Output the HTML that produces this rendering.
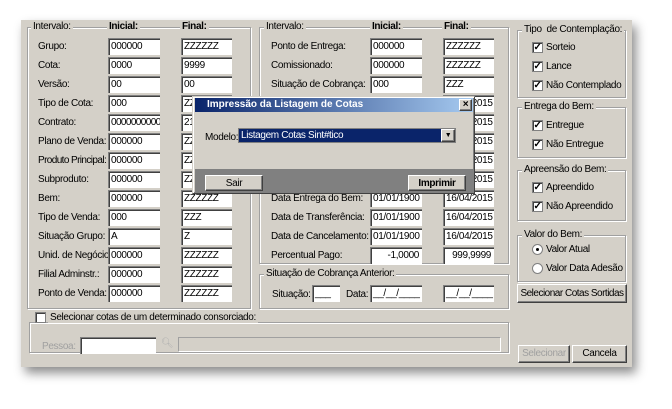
<!DOCTYPE html><html><head><style>
body{margin:0;width:672px;height:409px;background:#fff;position:relative;overflow:hidden;font-family:"Liberation Sans",sans-serif;font-size:10px;letter-spacing:-0.35px;color:#000}
div,span{position:absolute;box-sizing:border-box}
#win{left:21px;top:20px;width:611px;height:347px;background:#d4d0c8;box-shadow:4px 6px 10px rgba(0,0,0,.45)}
.gb{border:1px solid #a0a0a0;box-shadow:1px 1px 0 #fff,inset 1px 1px 0 #fff}
.lg{background:#d4d0c8;padding:0 2px;white-space:nowrap}
.l{white-space:nowrap}
.i{background:#fff;height:17px;border-top:1px solid #808080;border-left:1px solid #808080;box-shadow:inset 1px 1px 0 #404040;padding:2px 0 0 2px;white-space:nowrap;overflow:hidden}
.r{text-align:right;padding-right:3px}
.cb{width:11px;height:11px;background:#fff;border:1px solid #808080;box-shadow:inset 1px 1px 0 #404040;font-size:10px;line-height:9px;text-align:center;font-weight:bold}
.rb{width:11px;height:11px;border-radius:50%;background:#fff;border:1px solid #808080}
.bt{background:#d4d0c8;border:1px solid;border-color:#fff #404040 #404040 #fff;box-shadow:inset -1px -1px 0 #808080;text-align:center;line-height:15px;white-space:nowrap}
</style></head><body>
<div id="win"></div>
<div class="gb" style="left:27px;top:27px;width:224px;height:282px"></div>
<span class="lg" style="left:31px;top:21px">Intervalo:</span>
<span class="lg" style="left:107px;top:21px;font-weight:bold">Inicial:</span>
<span class="lg" style="left:180px;top:21px;font-weight:bold">Final:</span>

<span class="l" style="left:38px;top:41px">Grupo:</span><div class="i" style="left:108px;top:38px;width:52px">000000</div><div class="i" style="left:181px;top:38px;width:51px">ZZZZZZ</div>
<span class="l" style="left:38px;top:60px">Cota:</span><div class="i" style="left:108px;top:57px;width:52px">0000</div><div class="i" style="left:181px;top:57px;width:51px">9999</div>
<span class="l" style="left:38px;top:79px">Versão:</span><div class="i" style="left:108px;top:76px;width:52px">00</div><div class="i" style="left:181px;top:76px;width:51px">00</div>
<span class="l" style="left:38px;top:98px">Tipo de Cota:</span><div class="i" style="left:108px;top:95px;width:52px">000</div><div class="i" style="left:181px;top:95px;width:51px">ZZZ</div>
<span class="l" style="left:38px;top:117px">Contrato:</span><div class="i" style="left:108px;top:114px;width:52px;letter-spacing:-0.6px">0000000000</div><div class="i" style="left:181px;top:114px;width:51px">2199</div>
<span class="l" style="left:38px;top:136px">Plano de Venda:</span><div class="i" style="left:108px;top:133px;width:52px">000000</div><div class="i" style="left:181px;top:133px;width:51px">ZZZZZZ</div>
<span class="l" style="left:38px;top:155px;letter-spacing:-0.6px">Produto Principal:</span><div class="i" style="left:108px;top:152px;width:52px">000000</div><div class="i" style="left:181px;top:152px;width:51px">ZZZZZZ</div>
<span class="l" style="left:38px;top:174px">Subproduto:</span><div class="i" style="left:108px;top:171px;width:52px">000000</div><div class="i" style="left:181px;top:171px;width:51px">ZZZZZZ</div>
<span class="l" style="left:38px;top:193px">Bem:</span><div class="i" style="left:108px;top:190px;width:52px">000000</div><div class="i" style="left:181px;top:190px;width:51px">ZZZZZZ</div>
<span class="l" style="left:38px;top:212px">Tipo de Venda:</span><div class="i" style="left:108px;top:209px;width:52px">000</div><div class="i" style="left:181px;top:209px;width:51px">ZZZ</div>
<span class="l" style="left:38px;top:231px">Situação Grupo:</span><div class="i" style="left:108px;top:228px;width:52px">A</div><div class="i" style="left:181px;top:228px;width:51px">Z</div>
<span class="l" style="left:38px;top:250px">Unid. de Negócio:</span><div class="i" style="left:108px;top:247px;width:52px">000000</div><div class="i" style="left:181px;top:247px;width:51px">ZZZZZZ</div>
<span class="l" style="left:38px;top:269px">Filial Adminstr.:</span><div class="i" style="left:108px;top:266px;width:52px">000000</div><div class="i" style="left:181px;top:266px;width:51px">ZZZZZZ</div>
<span class="l" style="left:38px;top:288px">Ponto de Venda:</span><div class="i" style="left:108px;top:285px;width:52px">000000</div><div class="i" style="left:181px;top:285px;width:51px">ZZZZZZ</div>

<div class="gb" style="left:259px;top:27px;width:250px;height:237px"></div>
<span class="lg" style="left:264px;top:21px">Intervalo:</span>
<span class="lg" style="left:370px;top:21px;font-weight:bold">Inicial:</span>
<span class="lg" style="left:442px;top:21px;font-weight:bold">Final:</span>
<span class="l" style="left:271px;top:41px">Ponto de Entrega:</span><div class="i" style="left:370px;top:38px;width:52px">000000</div><div class="i" style="left:443px;top:38px;width:51px">ZZZZZZ</div>
<span class="l" style="left:271px;top:60px">Comissionado:</span><div class="i" style="left:370px;top:57px;width:52px">000000</div><div class="i" style="left:443px;top:57px;width:51px">ZZZZZZ</div>
<span class="l" style="left:271px;top:79px">Situação de Cobrança:</span><div class="i" style="left:370px;top:76px;width:52px">000</div><div class="i" style="left:443px;top:76px;width:51px">ZZZ</div>
<div class="i" style="left:443px;top:95px;width:51px">16/04/2015</div>
<div class="i" style="left:443px;top:114px;width:51px">16/04/2015</div>
<div class="i" style="left:443px;top:133px;width:51px">16/04/2015</div>
<div class="i" style="left:443px;top:152px;width:51px">16/04/2015</div>
<div class="i" style="left:443px;top:171px;width:51px">16/04/2015</div>
<span class="l" style="left:271px;top:193px">Data Entrega do Bem:</span><div class="i" style="left:370px;top:190px;width:52px">01/01/1900</div><div class="i" style="left:443px;top:190px;width:51px">16/04/2015</div>
<span class="l" style="left:271px;top:212px">Data de Transferência:</span><div class="i" style="left:370px;top:209px;width:52px">01/01/1900</div><div class="i" style="left:443px;top:209px;width:51px">16/04/2015</div>
<span class="l" style="left:271px;top:231px">Data de Cancelamento:</span><div class="i" style="left:370px;top:228px;width:52px">01/01/1900</div><div class="i" style="left:443px;top:228px;width:51px">16/04/2015</div>
<span class="l" style="left:271px;top:250px">Percentual Pago:</span><div class="i r" style="left:370px;top:247px;width:52px">-1,0000</div><div class="i r" style="left:443px;top:247px;width:51px">999,9999</div>

<div class="gb" style="left:259px;top:274px;width:250px;height:35px"></div>
<span class="lg" style="left:264px;top:268px">Situação de Cobrança Anterior:</span>
<span class="l" style="left:272px;top:289px">Situação:</span><div class="i" style="left:312px;top:285px;width:28px">___</div>
<span class="l" style="left:346px;top:289px">Data:</span><div class="i" style="left:370px;top:285px;width:52px">__/__/____</div><div class="i" style="left:443px;top:285px;width:51px">__/__/____</div>

<div class="gb" style="left:517px;top:30px;width:109px;height:68px"></div>
<span class="lg" style="left:522px;top:24px">Tipo &nbsp;de Contemplação:</span>
<div class="cb" style="left:532px;top:42px">✓</div><span class="l" style="left:546px;top:42px">Sorteio</span>
<div class="cb" style="left:532px;top:61px">✓</div><span class="l" style="left:546px;top:61px">Lance</span>
<div class="cb" style="left:532px;top:80px">✓</div><span class="l" style="left:546px;top:80px">Não Contemplado</span>
<div class="gb" style="left:517px;top:107px;width:109px;height:51px"></div>
<span class="lg" style="left:522px;top:101px">Entrega do Bem:</span>
<div class="cb" style="left:532px;top:120px">✓</div><span class="l" style="left:546px;top:120px">Entregue</span>
<div class="cb" style="left:532px;top:139px">✓</div><span class="l" style="left:546px;top:139px">Não Entregue</span>
<div class="gb" style="left:517px;top:170px;width:109px;height:51px"></div>
<span class="lg" style="left:522px;top:164px">Apreensão do Bem:</span>
<div class="cb" style="left:532px;top:182px">✓</div><span class="l" style="left:546px;top:182px">Apreendido</span>
<div class="cb" style="left:532px;top:201px">✓</div><span class="l" style="left:546px;top:201px">Não Apreendido</span>
<div class="gb" style="left:517px;top:235px;width:109px;height:47px"></div>
<span class="lg" style="left:522px;top:229px">Valor do Bem:</span>
<div class="rb" style="left:532px;top:244px"><span style="left:3px;top:3px;width:3px;height:3px;background:#000;border-radius:50%"></span></div><span class="l" style="left:546px;top:244px">Valor Atual</span>
<div class="rb" style="left:532px;top:263px"></div><span class="l" style="left:546px;top:263px">Valor Data Adesão</span>
<div class="bt" style="left:517px;top:284px;width:110px;height:19px;line-height:17px;letter-spacing:-0.5px">Selecionar Cotas Sortidas</div>

<div class="gb" style="left:29px;top:322px;width:480px;height:31px"></div>
<div class="cb" style="left:35px;top:312px"></div>
<span class="lg" style="left:48px;top:312px">Selecionar cotas de um determinado consorciado:</span>
<span class="l" style="left:42px;top:341px;color:#a0a0a0">Pessoa:</span>
<div class="i" style="left:80px;top:337px;width:76px"></div>
<span style="left:161px;top:338px;color:#b0b0b0">🔍︎</span>
<div style="left:178px;top:337px;width:323px;height:15px;border:1px solid #a0a0a0;border-right-color:#fff;border-bottom-color:#fff"></div>
<div class="bt" style="left:518px;top:345px;width:52px;height:18px;color:#a0a0a0">Selecionar</div>
<div class="bt" style="left:572px;top:345px;width:55px;height:18px">Cancela</div>

<div style="left:192px;top:96px;width:283px;height:98px;background:#d4d0c8;border:1px solid;border-color:#d4d0c8 #404040 #404040 #d4d0c8;box-shadow:inset 1px 1px 0 #fff,inset -1px -1px 0 #808080"></div>
<div style="left:195px;top:98px;width:278px;height:14px;background:linear-gradient(90deg,#0a246a,#a6caf0)"></div>
<span style="left:207px;top:99px;color:#fff;font-weight:bold;font-size:10px;letter-spacing:0">Impressão da Listagem de Cotas</span>
<div class="bt" style="left:459px;top:99px;width:13px;height:12px;line-height:10px;font-weight:bold;font-size:10px">×</div>
<span class="l" style="left:205px;top:132px">Modelo:</span>
<div style="left:238px;top:128px;width:218px;height:15px;background:#0a246a;border:1px solid #808080"></div>
<span class="l" style="left:241px;top:130px;color:#fff">Listagem Cotas Sint#tico</span>
<div class="bt" style="left:441px;top:129px;width:14px;height:13px;line-height:11px;font-size:7px">▼</div>
<div style="left:195px;top:169px;width:278px;height:23px;background:#808080"></div>
<div class="bt" style="left:205px;top:175px;width:58px;height:16px">Sair</div>
<div class="bt" style="left:408px;top:175px;width:58px;height:16px;font-weight:bold">Imprimir</div>
</body></html>
